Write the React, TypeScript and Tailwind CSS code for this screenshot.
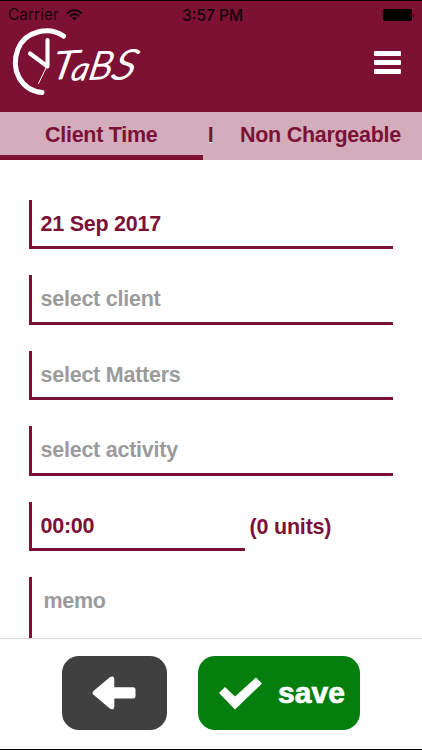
import React from 'react';

interface FieldProps {
    value?: string;
    placeholder?: string;
    className?: string;
}

function Field({ value, placeholder, className = 'w-[363.5px]' }: FieldProps) {
    return (
        <div className={`${className} h-[49.4px] shrink-0 border-l-3 border-b-3 border-[#7b1137] pl-[8.5px] pt-3 text-[21.5px] leading-6 tracking-[-0.24px]`}>
            {value ? <span>{value}</span> : <span className="text-[#9b9b9b]">{placeholder}</span>}
        </div>
    );
}

function Logo() {
    return (
        <svg className="absolute left-0 top-0" width="160" height="112" viewBox="0 0 160 112" fill="none" stroke="white" strokeLinecap="round">
            {/* Clock */}
            <path d="M63.5 35C49 25 25 30 18 48C10 69 21 89 42 91.5" strokeWidth="5" />
            <path d="M47.5 39V65.5L30 52.5" strokeWidth="4.1" strokeLinejoin="round" />
            <path d="M46.5 66L38.5 82.5" strokeWidth="1" />
            {/* Wordmark */}
            <g fill="white" strokeWidth="1.3" strokeLinejoin="round" fontFamily="Lato, sans-serif" fontStyle="italic" fontWeight="300">
                <text transform="translate(50 78.5) rotate(-4) skewX(-16) scale(1.2 1)" fontSize="38">T</text>
                <text transform="translate(70 78.5) skewX(-14) scale(1.05 1)" fontSize="32">a</text>
                <text transform="translate(87.5 78.5) rotate(-3) skewX(-14) scale(1.05 1)" fontSize="38">B</text>
                <text transform="translate(110 78.5) rotate(-3) skewX(-20) scale(1.15 1)" fontSize="40">S</text>
            </g>
        </svg>
    );
}

export default function App() {
    return (
        <div className="flex h-[750px] w-[422px] flex-col overflow-hidden border-y border-black bg-white font-['Liberation_Sans',Arial,sans-serif] font-bold text-[#7b1137]">
            {/* Header */}
            <header className="relative -mt-px h-28 shrink-0 border-t border-black bg-[#7d1134]">
                <Logo />
                <div className="relative flex h-7 items-center font-['Inter',sans-serif] text-black">
                    <span className="ml-2 w-[52px] text-[15.5px] font-normal opacity-80">Carrier</span>
                    <svg className="ml-1.5" width="17" height="12" viewBox="0 0 17 12" fill="none" stroke="#19030b" strokeWidth="2">
                        <path d="M1 4.5C5.5.3 11.5.3 16 4.5M3.7 7.2c3-2.6 6.6-2.6 9.6 0" />
                        <path d="M8.5 11.5L5.8 9q2.7-2 5.4 0Z" fill="#19030b" stroke="none" />
                    </svg>
                    <span className="ml-[99px] mt-px text-[15.5px] font-medium opacity-85">3:57 PM</span>
                    <span className="absolute left-[382.5px] top-[7.5px] h-3 w-[29px] rounded-[2px] bg-black" />
                    <span className="absolute left-[412.5px] top-[11.5px] h-1 w-[1.5px] rounded-r-full bg-black" />
                </div>
                <button aria-label="Menu" className="absolute left-[374px] top-[50px] flex flex-col gap-1">
                    <span className="h-[5px] w-[27px] rounded-[1px] bg-white" />
                    <span className="h-[5px] w-[27px] rounded-[1px] bg-white" />
                    <span className="h-[5px] w-[27px] rounded-[1px] bg-white" />
                </button>
            </header>

            {/* Tabs */}
            <nav className="flex h-12 shrink-0 bg-[#d3adbb] text-[21.5px] leading-[46px] tracking-[-0.28px] [text-shadow:0_1px_0_#f1e4eb]">
                <button className="flex h-12 w-[202.5px] justify-center border-b-[5px] border-[#7d1134]">Client Time</button>
                <span className="h-[43px] w-4 text-center">I</span>
                <button className="ml-[21.5px] flex h-[43px] whitespace-nowrap">Non Chargeable</button>
            </nav>

            {/* Time entry form */}
            <main className="flex h-[478px] shrink-0 flex-col gap-[26px] overflow-hidden pl-[29px] pt-10">
                <Field value="21 Sep 2017" />
                <Field placeholder="select client" />
                <Field placeholder="select Matters" />
                <Field placeholder="select activity" />
                <div className="flex shrink-0">
                    <Field value="00:00" className="w-[215.5px]" />
                    <span className="ml-[5px] pt-[13.5px] text-[21.5px] leading-6 tracking-[-0.2px]">(0 units)</span>
                </div>
                <div className="h-24 w-[363px] shrink-0 border-l-3 border-b-3 border-[#7b1137] pl-[11.5px] pt-3 text-[21.5px] leading-6 tracking-[-0.3px] text-[#9b9b9b]">memo</div>
            </main>

            {/* Actions */}
            <footer className="flex grow gap-[31px] border-t border-[#d7d7d7] pl-[61.5px] pt-[17px]">
                <button aria-label="Back" className="flex h-[74px] w-[105.5px] items-center justify-center rounded-[17px] bg-[#404040]">
                    <svg width="44" height="34" viewBox="0 0 44 34" fill="white">
                        <path d="M1.5 15.1L17.8 1.3Q22 -.8 22.3 3.5V11.2H41Q43.5 11.2 43.5 13.7V20Q43.5 22.5 41 22.5H22.3V30.4Q22 34.8 17.8 32.6L1.5 18.8Q-.5 17 1.5 15.1Z" />
                    </svg>
                </button>
                <button className="flex h-[74px] w-[162px] items-center rounded-[17px] bg-[#047f0e] pl-[21px] text-white">
                    <svg width="43" height="33" viewBox="0 0 43 33" fill="white">
                        <path d="M0 16L6 10L16 19.5L37 .5L43 6.5L16 32.5Z" />
                    </svg>
                    <span className="ml-4 text-[30px] leading-8 tracking-[0.1px] [-webkit-text-stroke:0.7px_white]">save</span>
                </button>
            </footer>
        </div>
    );
}
